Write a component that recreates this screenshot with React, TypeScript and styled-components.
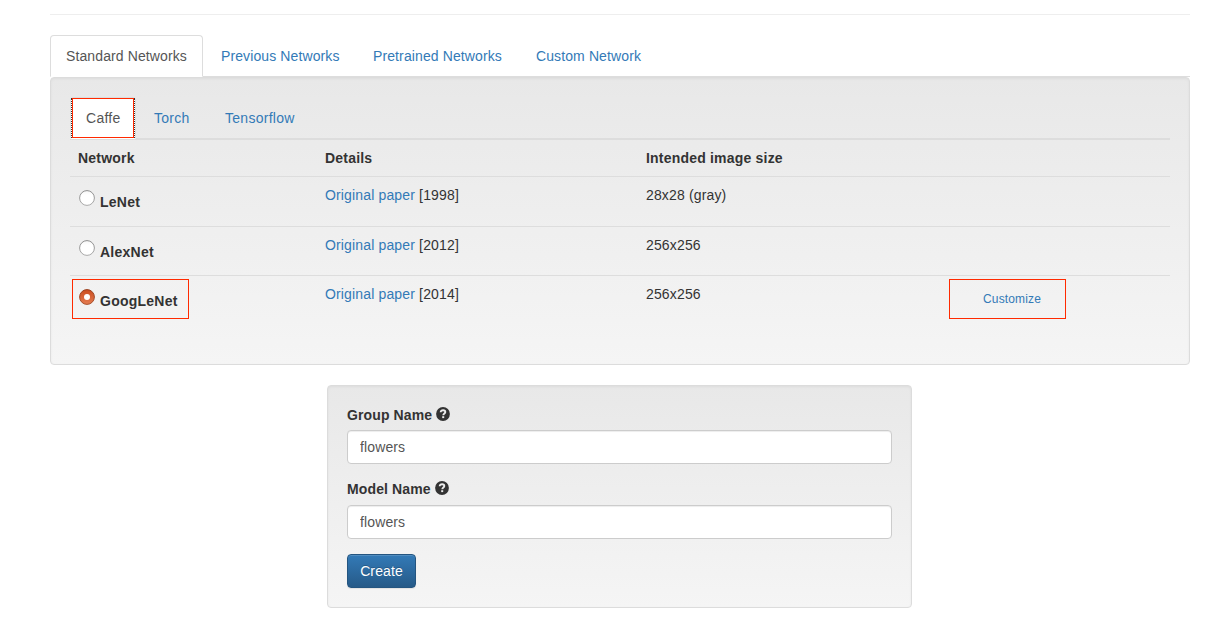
import React from "react";
import styled, { createGlobalStyle, css } from "styled-components";

const GlobalStyle = createGlobalStyle`
  *, *::before, *::after { box-sizing: border-box; }
  body {
    margin: 0;
    background: #fff;
    color: #333;
    font-family: "Liberation Sans", Arial, sans-serif;
    font-size: 14px;
    line-height: 20px;
    letter-spacing: 0.12px;
  }
`;

const Container = styled.main`
  width: 1140px;
  margin-left: 50px;
  padding-top: 14px;
`;

const Divider = styled.hr`
  margin: 0 0 20px;
  border: 0;
  border-top: 1px solid #eee;
`;

const Tabs = styled.nav<{ $inner?: boolean }>`
  display: flex;
  height: 42px;
  border-bottom: 1px solid #ddd;
  letter-spacing: ${(p) => (p.$inner ? 0.28 : 0.11)}px;
`;

const Tab = styled.a<{ $active?: boolean; $width: number }>`
  position: relative;
  width: ${(p) => p.$width}px;
  height: 42px;
  margin-right: 2px;
  padding: 10px 0 10px 15px;
  border: 1px solid transparent;
  border-radius: 4px 4px 0 0;
  color: #337ab7;
  white-space: nowrap;
  ${(p) =>
    p.$active &&
    css`
      color: #555;
      background: #fff;
      border-color: #ddd #ddd transparent;
    `}
`;

const Well = styled.section`
  padding: 19px;
  border: 1px solid #dcdcdc;
  border-radius: 4px;
  background: linear-gradient(to bottom, #e8e8e8 0%, #f5f5f5 100%);
  box-shadow: inset 0 1px 3px rgba(0, 0, 0, 0.05), 0 1px 0 rgba(255, 255, 255, 0.1);
`;

const NetworkWell = styled(Well)`
  height: 288px;
  margin-bottom: 20px;
`;

const FormWell = styled(Well)`
  width: 585px;
  height: 223px;
  margin-left: 277px;
`;

const Highlight = styled.span<{ $x: number; $y: number; $w: number; $dotted?: boolean }>`
  position: absolute;
  left: ${(p) => p.$x}px;
  top: ${(p) => p.$y}px;
  width: ${(p) => p.$w}px;
  height: 40px;
  border: 1px solid #ff2a00;
  pointer-events: none;
  ${(p) =>
    p.$dotted &&
    css`
      &::before {
        content: "";
        position: absolute;
        inset: -1px -2px;
        border: dotted #333;
        border-width: 0 1px;
      }
    `}
`;

const Table = styled.div`
  display: flex;
  flex-direction: column;
  border-top: 1px solid #ddd;
`;

const Row = styled.div<{ $height: number; $head?: boolean }>`
  position: relative;
  display: grid;
  grid-template-columns: 247px 321px 303px 1fr;
  height: ${(p) => p.$height}px;
  padding: 8px 8px 0;
  border-top: ${(p) => (p.$head ? "0" : "1px solid #ddd")};
  font-weight: ${(p) => (p.$head ? 700 : 400)};
  letter-spacing: ${(p) => (p.$head ? 0.2 : 0.15)}px;
`;

const Option = styled.label`
  display: flex;
  align-items: flex-start;
  gap: 5px;
  padding: 5px 0 0 1px;
  font-weight: 700;
  letter-spacing: 0.24px;
`;

const OptionName = styled.span`
  padding-top: 2px;
`;

const Link = styled.a`
  color: #337ab7;
`;

const Customize = styled(Link)`
  padding: 6px 0 0 34px;
  font-size: 12px;
  line-height: 18px;
`;

const Label = styled.label`
  display: flex;
  align-items: center;
  gap: 4px;
  height: 20px;
  margin-bottom: 5px;
  font-weight: 700;

  svg {
    margin-bottom: 2px;
  }
`;

const Input = styled.input`
  display: block;
  width: 545px;
  height: 34px;
  margin-bottom: 15px;
  padding: 6px 12px;
  border: 1px solid #ccc;
  border-radius: 4px;
  outline: none;
  background: #fff;
  color: #555;
  font: inherit;
  letter-spacing: inherit;
  box-shadow: inset 0 1px 1px rgba(0, 0, 0, 0.075);
`;

const ModelLabel = styled(Label)`
  margin-bottom: 6px;
`;

const CreateButton = styled.button`
  display: block;
  width: 69px;
  height: 34px;
  padding: 0;
  border: 1px solid #245580;
  border-radius: 4px;
  background: linear-gradient(to bottom, #337ab7 0%, #265a88 100%);
  color: #fff;
  font: inherit;
  letter-spacing: inherit;
  text-shadow: 0 -1px 0 rgba(0, 0, 0, 0.2);
  box-shadow: inset 0 1px 0 rgba(255, 255, 255, 0.15), 0 1px 1px rgba(0, 0, 0, 0.075);
`;

function Radio({ checked, id }: { checked?: boolean; id: string }) {
  return (
    <svg width="16" height="16" viewBox="0 0 16 16">
      <defs>
        <linearGradient id={`fill-${id}`} x1="0" y1="0" x2="0" y2="1">
          <stop offset="0" stopColor={checked ? "#cb4c1f" : "#f6f6f6"} />
          <stop offset={checked ? "1" : "0.3"} stopColor={checked ? "#e57c51" : "#fff"} />
        </linearGradient>
        <linearGradient id={`edge-${id}`} x1="0" y1="0" x2="0" y2="1">
          <stop offset="0" stopColor={checked ? "#97401f" : "#8c8c8c"} />
          <stop offset="1" stopColor={checked ? "#a95330" : "#aaa"} />
        </linearGradient>
      </defs>
      <circle cx="8" cy="8" r="7.4" fill={`url(#fill-${id})`} stroke={`url(#edge-${id})`} />
      {checked && <circle cx="8" cy="8" r="3" fill="#fff" />}
    </svg>
  );
}

function HelpIcon() {
  return (
    <svg width="14" height="14" viewBox="0 0 14 14">
      <circle cx="7" cy="7" r="6.9" fill="#333" />
      <path d="M4.7 5.3C4.7 3.8 5.7 3.2 7.1 3.2c1.3 0 2.2.7 2.2 1.8C9.3 6.5 7.3 6.5 7.3 8.2" fill="none" stroke="#ededed" strokeWidth="1.9" />
      <path d="M6.2 9.2h2v1.9h-2z" fill="#ededed" />
    </svg>
  );
}

const networks = [
  { name: "LeNet", year: 1998, size: "28x28 (gray)", height: 50 },
  { name: "AlexNet", year: 2012, size: "256x256", height: 49 },
  { name: "GoogLeNet", year: 2014, size: "256x256", height: 50, selected: true },
];

export default function App() {
  return (
    <>
      <GlobalStyle />
      <Container>
        <Divider />
        <Tabs>
          <Tab $active $width={153}>Standard Networks</Tab>
          <Tab $width={150}>Previous Networks</Tab>
          <Tab $width={161}>Pretrained Networks</Tab>
          <Tab $width={137}>Custom Network</Tab>
        </Tabs>
        <NetworkWell>
          <Tabs $inner>
            <Tab $active $width={66}>
              Caffe
              <Highlight $x={1} $y={0} $w={62} $dotted />
            </Tab>
            <Tab $width={69}>Torch</Tab>
            <Tab $width={103}>Tensorflow</Tab>
          </Tabs>
          <Table>
            <Row $head $height={36}>
              <span>Network</span>
              <span>Details</span>
              <span>Intended image size</span>
            </Row>
            {networks.map((n) => (
              <Row key={n.name} $height={n.height}>
                <Option>
                  <Radio id={n.name} checked={n.selected} />
                  <OptionName>{n.name}</OptionName>
                </Option>
                <span>
                  <Link>Original paper</Link> [{n.year}]
                </span>
                <span>{n.size}</span>
                {n.selected && (
                  <>
                    <Customize>Customize</Customize>
                    <Highlight $x={2} $y={3} $w={117} />
                    <Highlight $x={879} $y={3} $w={117} />
                  </>
                )}
              </Row>
            ))}
          </Table>
        </NetworkWell>
        <FormWell>
          <Label>Group Name <HelpIcon /></Label>
          <Input defaultValue="flowers" />
          <ModelLabel>Model Name <HelpIcon /></ModelLabel>
          <Input defaultValue="flowers" />
          <CreateButton>Create</CreateButton>
        </FormWell>
      </Container>
    </>
  );
}
